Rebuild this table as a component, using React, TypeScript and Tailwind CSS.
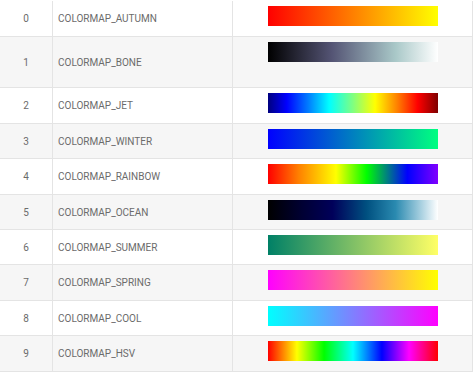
const colormaps = [
  {
    name: "COLORMAP_AUTUMN",
    h: "h-[36px]",
    bg: "linear-gradient(to right, #ff0000, #ffff00)",
  },
  {
    name: "COLORMAP_BONE",
    h: "h-[51px]",
    bg: "linear-gradient(to right, #000000 0%, #545474 37.5%, #a9c8c8 75%, #ffffff 100%)",
  },
  {
    name: "COLORMAP_JET",
    h: "h-[36px]",
    bg: "linear-gradient(to right, #00007f 0%, #0000ff 11%, #0080ff 24%, #00ffff 36%, #80ff80 50%, #ffff00 63%, #ff8000 76%, #ff0000 88%, #7f0000 100%)",
  },
  {
    name: "COLORMAP_WINTER",
    h: "h-[35px]",
    bg: "linear-gradient(to right, #0000ff, #00ff80)",
  },
  {
    name: "COLORMAP_RAINBOW",
    h: "h-[36px]",
    bg: "linear-gradient(to right, #ff0000 0%, #ff8000 18%, #ffff00 40%, #00ff00 58%, #008080 70%, #0000ff 82%, #8000ff 100%)",
  },
  {
    name: "COLORMAP_OCEAN",
    h: "h-[35px]",
    bg: "linear-gradient(to right, #000000 0%, #000033 20%, #00005a 38%, #005080 58%, #2a8ab0 75%, #a8d0e0 90%, #ffffff 100%)",
  },
  {
    name: "COLORMAP_SUMMER",
    h: "h-[35px]",
    bg: "linear-gradient(to right, #008066, #ffff66)",
  },
  {
    name: "COLORMAP_SPRING",
    h: "h-[36px]",
    bg: "linear-gradient(to right, #ff00ff, #ffff00)",
  },
  {
    name: "COLORMAP_COOL",
    h: "h-[35px]",
    bg: "linear-gradient(to right, #00ffff, #ff00ff)",
  },
  {
    name: "COLORMAP_HSV",
    h: "h-[36px]",
    bg: "linear-gradient(to right, #ff0000 0%, #ffff00 17%, #00ff00 33%, #00ffff 50%, #0000ff 67%, #ff00ff 83%, #ff0000 100%)",
  },
];

export default function App() {
  return (
    <div className="w-[474px] h-[373px] bg-white overflow-hidden">
      <div
        className="w-[473px] pt-px text-[10px] text-[#6b6b6b]"
        style={{ fontFamily: "Roboto, 'Liberation Sans', sans-serif" }}
      >
        {colormaps.map((cm, i) => (
          <div
            key={cm.name}
            className={`grid grid-cols-[53px_180px_240px] border-b border-[#e4e4e4] ${cm.h} ${
              i % 2 === 1 ? "bg-[#f6f6f6]" : "bg-white"
            }`}
          >
            <div className="flex items-center justify-center border-r border-[#e4e4e4]">
              {i}
            </div>
            <div className="flex items-center pl-[5px] border-r border-[#e4e4e4]">
              {cm.name}
            </div>
            <div className="flex justify-center pt-[5px] border-r border-[#e4e4e4]">
              <div className="w-[170px] h-[20px]" style={{ background: cm.bg }} />
            </div>
          </div>
        ))}
      </div>
    </div>
  );
}
